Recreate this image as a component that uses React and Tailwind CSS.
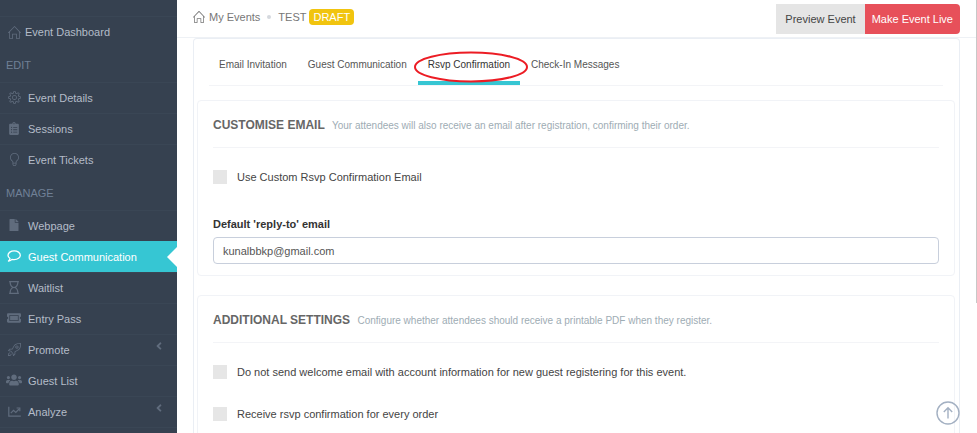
import { useState } from 'react'
import { SlHome, SlSettings, SlRocket, SlBulb } from 'react-icons/sl'
import { FaClipboardList, FaFile, FaRegHourglass, FaTicketAlt, FaUsers, FaAngleLeft } from 'react-icons/fa'

const CommentIcon = ({ className }) => (
  <svg viewBox="0 0 14 12" className={className} fill="none" stroke="currentColor" strokeWidth="1.3" strokeLinejoin="round">
    <path d="M7.2.8C3.8.8 1 2.8 1 5.2c0 1.4.8 2.5 2 3.3-.1 1-.7 1.900-1.500 2.600 1.500-.1 2.700-.7 3.500-1.700.7.2 1.400.2 2.200.2 3.400 0 6.100-2 6.100-4.400S10.600.8 7.200.8z" />
  </svg>
)

const ChartIcon = ({ className }) => (
  <svg viewBox="0 0 13 11" className={className} fill="none" stroke="currentColor" strokeWidth="1.2">
    <path d="M.8.8v9.400h12M2.800 7.200l2.700-2.900 2.300 2.200 3.300-3.500" />
    <path d="M8.600 2h3.200v3.200" />
  </svg>
)

const edit = [
  { label: 'Event Details', icon: SlSettings, size: 'w-[13px] h-[13px]' },
  { label: 'Sessions', icon: FaClipboardList, size: 'w-3 h-[13px]' },
  { label: 'Event Tickets', icon: SlBulb, size: 'w-[13px] h-[13px]' },
]

const manage = [
  { label: 'Webpage', icon: FaFile, size: 'w-3 h-3' },
  { label: 'Guest Communication', icon: CommentIcon, size: 'w-[14px] h-3', active: true },
  { label: 'Waitlist', icon: FaRegHourglass, size: 'w-3 h-[13px]' },
  { label: 'Entry Pass', icon: FaTicketAlt, size: 'w-[14px] h-[14px]' },
  { label: 'Promote', icon: SlRocket, size: 'w-[13px] h-[13px]', more: true },
  { label: 'Guest List', icon: FaUsers, size: 'w-4 h-4' },
  { label: 'Analyze', icon: ChartIcon, size: 'w-[13px] h-[11px]', more: true },
]

const tabs = ['Email Invitation', 'Guest Communication', 'Rsvp Confirmation', 'Check-In Messages']

function NavItem({ label, icon: Icon, size, active, more }) {
  return (
    <li>
      <a
        href="#"
        className={`flex items-center h-[31px] pl-1.5 border-t ${active ? 'bg-[#36c6d3] border-[#36c6d3] text-white' : 'border-[#3a4655] text-[#b4bcc8]'}`}
      >
        <span className={`w-4 mr-1.5 mb-0.5 flex justify-center ${active ? 'text-white' : 'text-[#606c7d]'}`}>
          <Icon className={size} />
        </span>
        {label}
        {more && <FaAngleLeft className="ml-auto mr-3 mb-2 w-3 h-3 text-[#606c7d]" />}
        {active && <span className="ml-auto border-y-[10px] border-y-transparent border-r-[10px] border-r-white" />}
      </a>
    </li>
  )
}

function NavHeading({ children }) {
  return <h3 className="h-[35px] pl-1.5 flex items-center text-[#708096]">{children}</h3>
}

function Card({ title, hint, children }) {
  return (
    <section className="border border-[#f1f3f7] rounded px-[15px] pb-[11px]">
      <div className="h-[47px] flex items-center pt-0.5 border-b border-[#f3f4f7]">
        <h2 className="whitespace-nowrap text-[12px] font-bold text-[#666]">
          {title} <small className="ml-1 text-[10px] font-normal text-[#9eacb4]">{hint}</small>
        </h2>
      </div>
      {children}
    </section>
  )
}

function Check({ label }) {
  return (
    <label className="flex items-center h-[42px] gap-2.5 text-[#444]">
      <input type="checkbox" className="appearance-none w-3.5 h-3.5 bg-[#e6e6e6] checked:bg-[#36c6d3]" />
      {label}
    </label>
  )
}

export default function App() {
  const [tab, setTab] = useState('Rsvp Confirmation')
  const [email, setEmail] = useState('kunalbbkp@gmail.com')

  return (
    <div className="flex h-screen bg-white text-[11px] leading-4 font-['Liberation_Sans',Arial,sans-serif]">
      <nav className="w-[177px] shrink-0 pt-4 overflow-hidden bg-[#364150]">
        <a href="#" className="flex items-center h-[31px] pl-2 gap-1 border-t border-[#3a4655] text-[#b4bcc8]">
          <SlHome className="w-[13px] h-[13px] text-[#606c7d]" />
          Event Dashboard
        </a>
        <NavHeading>EDIT</NavHeading>
        <ul>{edit.map((i) => <NavItem key={i.label} {...i} />)}</ul>
        <NavHeading>MANAGE</NavHeading>
        <ul className="border-b border-[#3a4655]">{manage.map((i) => <NavItem key={i.label} {...i} />)}</ul>
      </nav>

      <div className="flex-1 min-w-0 flex flex-col">
        <header className="h-[38px] shrink-0 pl-4 pr-[17px] flex items-center justify-between border-b border-[#eef1f5]">
          <div className="flex items-center mb-1 text-[#777]">
            <SlHome className="w-3 h-3 mr-1" />
            <a href="#">My Events</a>
            <span className="w-1 h-1 mx-[7px] rounded-full bg-[#d5d9de]" />
            TEST
            <span className="ml-[3px] h-4 px-1 rounded-sm bg-[#f1c40f] text-white">DRAFT</span>
          </div>
          <div className="flex h-[30px]">
            <button className="px-[9px] bg-[#e5e5e5] text-[#444]">Preview Event</button>
            <button className="px-[7px] rounded-r-sm bg-[#e7505a] text-white">Make Event Live</button>
          </div>
        </header>

        <main className="flex-1 min-h-0 overflow-y-auto [scrollbar-width:none] pl-4 pr-[17px]">
          <div className="pl-[3px] pr-1 pb-4 border border-b-0 border-[#eaeef4] rounded-t-sm">
            <div className="mx-3 mb-[14px] flex gap-px h-[47px] border-b border-[#f3f4f7] text-[10px]">
              {tabs.map((t) => (
                <button
                  key={t}
                  onClick={() => setTab(t)}
                  className={`px-2.5 pt-[18px] pb-2 border-b-4 whitespace-nowrap ${t === tab ? 'relative border-[#36c6d3] text-[#333]' : 'border-transparent text-[#555]'}`}
                >
                  {t}
                  {t === tab && (
                    <svg viewBox="0 0 114 32" className="absolute -left-1 top-3 w-[114px] h-8 pointer-events-none" fill="none">
                      <ellipse cx="57" cy="16" rx="56" ry="14.5" stroke="#ec1c24" strokeWidth="2" />
                    </svg>
                  )}
                </button>
              ))}
            </div>

            <div className="flex flex-col gap-[19px]">
              <Card title="CUSTOMISE EMAIL" hint="Your attendees will also receive an email after registration, confirming their order.">
                <div className="pt-2">
                  <Check label="Use Custom Rsvp Confirmation Email" />
                </div>
                <label htmlFor="reply" className="block mt-[18px] mb-[5px] font-bold text-[#333]">Default 'reply-to' email</label>
                <input
                  id="reply"
                  type="email"
                  value={email}
                  onChange={(e) => setEmail(e.target.value)}
                  className="block w-full h-[27px] px-[9px] border border-[#c8cfdc] rounded text-[#555] outline-none"
                />
              </Card>
              <Card title="ADDITIONAL SETTINGS" hint="Configure whether attendees should receive a printable PDF when they register.">
                <div className="pt-2">
                  <Check label="Do not send welcome email with account information for new guest registering for this event." />
                  <Check label="Receive rsvp confirmation for every order" />
                </div>
              </Card>
            </div>
          </div>
        </main>
      </div>

      <button aria-label="Back to top" className="fixed right-[17px] bottom-2 text-[#a3b0c2]">
        <svg viewBox="0 0 24 24" className="w-6 h-6" fill="none" stroke="currentColor" strokeWidth="1.4">
          <circle cx="12" cy="12" r="11" />
          <path d="M12 17.5V7M7.8 11 12 6.8 16.2 11" />
        </svg>
      </button>
      <div className="fixed right-0 top-0 w-px h-[70%] bg-[#c8c8c8]" />
    </div>
  )
}
